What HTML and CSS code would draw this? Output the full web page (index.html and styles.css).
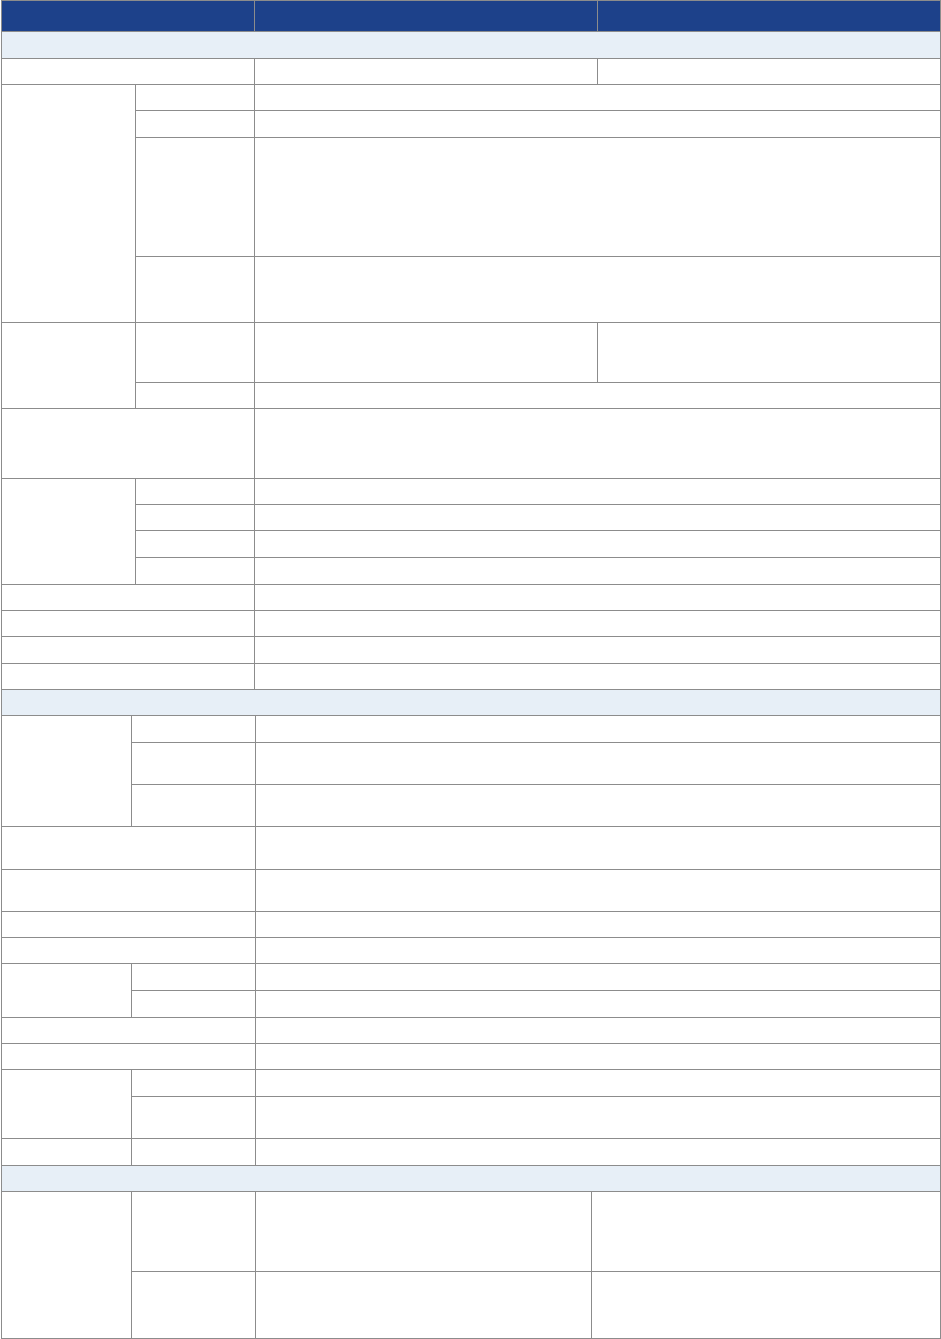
FILE: index.html
```html
<!DOCTYPE html>
<html lang="en">
<head>
<meta charset="utf-8">
<title>Specification table</title>
<link rel="stylesheet" href="styles.css">
</head>
<body>
<div class="sheet">
  <table class="spec spec-a">
    <colgroup><col class="a1"><col class="a2"><col class="a3"><col class="a4"></colgroup>
    <thead>
      <tr class="h31"><th colspan="2"></th><th></th><th></th></tr>
    </thead>
    <tbody>
      <tr class="sec h27"><td colspan="4"></td></tr>
      <tr class="h26"><td colspan="2"></td><td></td><td></td></tr>
      <tr class="h26"><td rowspan="4"></td><td></td><td colspan="2"></td></tr>
      <tr class="h27"><td></td><td colspan="2"></td></tr>
      <tr class="h119"><td></td><td colspan="2"></td></tr>
      <tr class="h66"><td></td><td colspan="2"></td></tr>
      <tr class="h60"><td rowspan="2"></td><td></td><td></td><td></td></tr>
      <tr class="h26"><td></td><td colspan="2"></td></tr>
      <tr class="h70"><td colspan="2"></td><td colspan="2"></td></tr>
      <tr class="h26"><td rowspan="4"></td><td></td><td colspan="2"></td></tr>
      <tr class="h26"><td></td><td colspan="2"></td></tr>
      <tr class="h27"><td></td><td colspan="2"></td></tr>
      <tr class="h27"><td></td><td colspan="2"></td></tr>
      <tr class="h26"><td colspan="2"></td><td colspan="2"></td></tr>
      <tr class="h26"><td colspan="2"></td><td colspan="2"></td></tr>
      <tr class="h27"><td colspan="2"></td><td colspan="2"></td></tr>
      <tr class="h26"><td colspan="2"></td><td colspan="2"></td></tr>
    </tbody>
  </table>

  <table class="spec spec-b">
    <colgroup><col class="b1"><col class="b2"><col class="b3"></colgroup>
    <tbody>
      <tr class="sec h26"><td colspan="3"></td></tr>
      <tr class="h27"><td rowspan="3"></td><td></td><td></td></tr>
      <tr class="h42"><td></td><td></td></tr>
      <tr class="h42"><td></td><td></td></tr>
      <tr class="h43"><td colspan="2"></td><td></td></tr>
      <tr class="h42"><td colspan="2"></td><td></td></tr>
      <tr class="h26"><td colspan="2"></td><td></td></tr>
      <tr class="h26"><td colspan="2"></td><td></td></tr>
      <tr class="h27"><td rowspan="2"></td><td></td><td></td></tr>
      <tr class="h27"><td></td><td></td></tr>
      <tr class="h26"><td colspan="2"></td><td></td></tr>
      <tr class="h26"><td colspan="2"></td><td></td></tr>
      <tr class="h27"><td rowspan="2"></td><td></td><td></td></tr>
      <tr class="h42"><td></td><td></td></tr>
      <tr class="h27"><td></td><td></td><td></td></tr>
    </tbody>
  </table>

  <table class="spec spec-c">
    <colgroup><col class="c1"><col class="c2"><col class="c3"><col class="c4"></colgroup>
    <tbody>
      <tr class="sec h26"><td colspan="4"></td></tr>
      <tr class="h80"><td rowspan="2"></td><td></td><td></td><td></td></tr>
      <tr class="h67"><td></td><td></td><td></td></tr>
    </tbody>
  </table>
</div>
</body>
</html>
```

FILE: styles.css
```css
html, body {
  margin: 0;
  padding: 0;
  background: #ffffff;
  font-family: "Liberation Sans", Arial, sans-serif;
}

.sheet {
  padding-left: 1px;
  width: 939px;
}

.spec {
  width: 939px;
  border-collapse: collapse;
  table-layout: fixed;
  font-size: 0;
  line-height: 0;
}

.spec + .spec {
  margin-top: -1px;
}

.spec td,
.spec th {
  border: 1px solid #8c8c8c;
  padding: 0;
}

.spec thead th {
  background: #1d418a;
  border-color: #8c8c8c;
}

.spec .sec td {
  background: #e7eff7;
}

.a1 { width: 134px; }
.a2 { width: 119px; }
.a3 { width: 343px; }
.a4 { width: 343px; }

.b1 { width: 130px; }
.b2 { width: 124px; }
.b3 { width: 685px; }

.c1 { width: 130px; }
.c2 { width: 124px; }
.c3 { width: 336px; }
.c4 { width: 349px; }

.h26 { height: 26px; }
.h27 { height: 27px; }
.h31 { height: 31px; }
.h42 { height: 42px; }
.h43 { height: 43px; }
.h60 { height: 60px; }
.h66 { height: 66px; }
.h67 { height: 67px; }
.h70 { height: 70px; }
.h80 { height: 80px; }
.h119 { height: 119px; }
```
